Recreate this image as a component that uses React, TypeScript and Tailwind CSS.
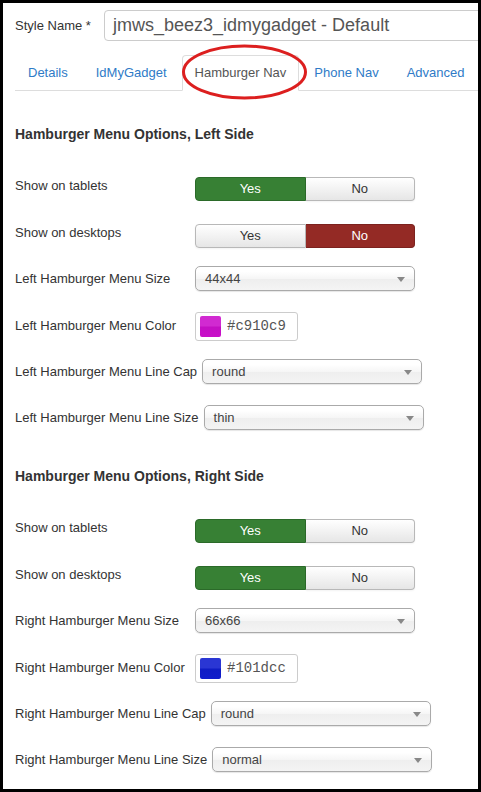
import React from 'react'

type Row =
  | { kind: 'toggle'; label: string; value: 'yes' | 'no' }
  | { kind: 'select'; label: string; value: string }
  | { kind: 'color'; label: string; value: string; swatch: string }

const heights = ['h-[47px]', 'h-[42px]', 'h-[46px]', 'h-[47px]', 'h-[46px]', 'h-[61px]']

function Toggle({ value }: { value: 'yes' | 'no' }) {
  const off =
    'bg-gradient-to-b from-white to-[#e6e6e6] text-[#333] border-[#b8b8b8] shadow-[inset_0_1px_0_rgba(255,255,255,0.3),0_1px_2px_rgba(0,0,0,0.05)]'
  return (
    <div className="flex h-[24px] w-[220px] shrink-0 text-[13px]">
      <div
        className={`flex-1 flex items-center justify-center border rounded-l-[4px] ${
          value === 'yes' ? 'bg-[#378034] border-[#2b6a29] text-white' : off
        }`}
      >
        Yes
      </div>
      <div
        className={`flex-1 flex items-center justify-center border border-l-0 rounded-r-[4px] ${
          value === 'no' ? 'bg-[#942a25] border-[#7c221e] text-white' : off
        }`}
      >
        No
      </div>
    </div>
  )
}

function Select({ value }: { value: string }) {
  return (
    <div className="relative flex h-[25px] w-[220px] shrink-0 items-center rounded-[5px] border border-[#aaa] bg-[linear-gradient(#fff_20%,#f6f6f6_50%,#eee_52%,#f4f4f4_100%)] pl-[9px] text-[13px] text-[#444] shadow-[0_1px_1px_rgba(0,0,0,0.1)]">
      {value}
      <svg className="absolute right-[9px] top-[10px]" width="8" height="5" viewBox="0 0 8 5">
        <path d="M0 0 L8 0 L4 5 Z" fill="#888" />
      </svg>
    </div>
  )
}

function ColorField({ value, swatch }: { value: string; swatch: string }) {
  return (
    <div className="flex h-[29px] w-[103px] shrink-0 items-center rounded-[3px] border border-[#ccc] bg-white pl-[4px]">
      <div className={`h-[21px] w-[21px] rounded-[2px] ${swatch}`} />
      <span className="ml-[6px] font-['Liberation_Mono',monospace] text-[14px] text-[#555]">{value}</span>
    </div>
  )
}

function Section({ title, rows, first }: { title: string; rows: Row[]; first?: boolean }) {
  return (
    <div>
      <h3 className={`h-[20px] text-[14px] font-bold leading-[20px] text-[#333] ${first ? 'mt-[33px]' : 'mt-0'}`}>
        {title}
      </h3>
      <div className="mt-[33px]">
        {rows.map((r, i) => (
          <div key={i} className={`flex items-start ${heights[i]}`}>
            <label
              className={`min-w-[180px] shrink-0 whitespace-nowrap pr-[5px] text-[13px] leading-[18px] text-[#333] ${
                r.kind === 'toggle' ? 'pt-0' : r.kind === 'color' ? 'pt-[5px]' : 'pt-[4px]'
              }`}
            >
              {r.label}
            </label>
            {r.kind === 'toggle' && <Toggle value={r.value} />}
            {r.kind === 'select' && <Select value={r.value} />}
            {r.kind === 'color' && <ColorField value={r.value} swatch={r.swatch} />}
          </div>
        ))}
      </div>
    </div>
  )
}

export default function App() {
  const tabs = ['Details', 'IdMyGadget', 'Hamburger Nav', 'Phone Nav', 'Advanced']

  const left: Row[] = [
    { kind: 'toggle', label: 'Show on tablets', value: 'yes' },
    { kind: 'toggle', label: 'Show on desktops', value: 'no' },
    { kind: 'select', label: 'Left Hamburger Menu Size', value: '44x44' },
    { kind: 'color', label: 'Left Hamburger Menu Color', value: '#c910c9', swatch: 'bg-[linear-gradient(#d12ad1_0%,#d12ad1_48%,#c30fc3_52%,#c910c9_100%)]' },
    { kind: 'select', label: 'Left Hamburger Menu Line Cap', value: 'round' },
    { kind: 'select', label: 'Left Hamburger Menu Line Size', value: 'thin' },
  ]
  const right: Row[] = [
    { kind: 'toggle', label: 'Show on tablets', value: 'yes' },
    { kind: 'toggle', label: 'Show on desktops', value: 'yes' },
    { kind: 'select', label: 'Right Hamburger Menu Size', value: '66x66' },
    { kind: 'color', label: 'Right Hamburger Menu Color', value: '#101dcc', swatch: 'bg-[linear-gradient(#2a36d4_0%,#2a36d4_48%,#0f1cc4_52%,#101dcc_100%)]' },
    { kind: 'select', label: 'Right Hamburger Menu Line Cap', value: 'round' },
    { kind: 'select', label: 'Right Hamburger Menu Line Size', value: 'normal' },
  ]

  return (
    <div className="h-[792px] w-[481px] bg-black p-[3px] font-['Liberation_Sans',Arial,sans-serif]">
      <div className="relative h-[786px] w-[475px] overflow-hidden bg-white pl-[12px]">
        {/* style name */}
        <div className="mt-[7px] flex items-center">
          <label className="w-[89px] shrink-0 whitespace-nowrap text-[13px] text-[#333]">Style Name *</label>
          <div className="flex h-[31px] w-[400px] shrink-0 items-center whitespace-nowrap rounded-l-[4px] border border-[#ccc] pl-[8px] text-[18px] text-[#555]">
            jmws_beez3_idmygadget - Default
          </div>
        </div>

        {/* tabs */}
        <ul className="mt-[14px] flex border-b border-[#ddd]">
          {tabs.map((t) => (
            <li key={t} className="-mb-px shrink-0">
              <span
                className={`mr-[2px] block whitespace-nowrap rounded-t-[4px] border px-3 py-2 text-[13px] leading-[18px] ${
                  t === 'Hamburger Nav'
                    ? 'border-[#ddd] border-b-white bg-white text-[#555]'
                    : 'border-transparent text-[#2f7bc7]'
                }`}
              >
                {t}
              </span>
            </li>
          ))}
        </ul>

        <Section title="Hamburger Menu Options, Left Side" rows={left} first />
        <Section title="Hamburger Menu Options, Right Side" rows={right} />

        {/* red annotation circle */}
        <svg className="absolute left-0 top-0" width="475" height="120" viewBox="0 0 475 120">
          <ellipse cx="241.5" cy="69" rx="61" ry="26" fill="none" stroke="#dc1f1f" strokeWidth="3" />
        </svg>
      </div>
    </div>
  )
}
